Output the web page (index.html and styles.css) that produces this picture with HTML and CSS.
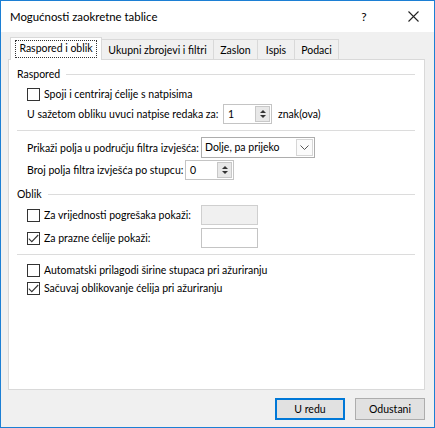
FILE: index.html
```html
<!DOCTYPE html>
<html lang="hr">
<head>
<meta charset="utf-8">
<title>Mogućnosti zaokretne tablice</title>
<link rel="stylesheet" href="styles.css">
</head>
<body>
<div class="window">
  <div class="titlebar">
    <span class="title">Mogućnosti zaokretne tablice</span>
    <span class="help">?</span>
    <span class="close">
      <svg width="11" height="11" viewBox="0 0 11 11"><path d="M0.5 0.5 L10.5 10.5 M10.5 0.5 L0.5 10.5" stroke="#222" stroke-width="1.1" fill="none"/></svg>
    </span>
  </div>

  <div class="client">
    <div class="tabs">
      <div class="tab active t-layout"><span class="focus">Raspored i oblik</span></div>
      <div class="tab t-totals">Ukupni zbrojevi i filtri</div>
      <div class="tab t-display">Zaslon</div>
      <div class="tab t-print">Ispis</div>
      <div class="tab t-data">Podaci</div>
    </div>

    <div class="panel">
      <div class="group"><span>Raspored</span><i class="rule"></i></div>

      <label class="row r-check1">
        <span class="box"></span>
        <span>Spoji i centriraj ćelije s natpisima</span>
      </label>

      <div class="row r-indent">
        <span class="plain lbl-indent">U sažetom obliku uvuci natpise redaka za:</span>
        <span class="spin">
          <span class="val">1</span>
          <span class="arrows"><b class="up"></b><b class="down"></b></span>
        </span>
        <span class="unit">znak(ova)</span>
      </div>

      <div class="sep sep1"></div>

      <div class="row r-filter">
        <span class="plain lbl-filter">Prikaži polja u području filtra izvješća:</span>
        <span class="select">
          <span class="val">Dolje, pa prijeko</span>
          <span class="drop">
            <svg width="9" height="5" viewBox="0 0 9 5"><path d="M0.5 0.5 L4.5 4.5 L8.5 0.5" stroke="#555" fill="none"/></svg>
          </span>
        </span>
      </div>

      <div class="row r-count">
        <span class="plain lbl-count">Broj polja filtra izvješća po stupcu:</span>
        <span class="spin">
          <span class="val">0</span>
          <span class="arrows"><b class="up"></b><b class="down"></b></span>
        </span>
      </div>

      <div class="group g-oblik"><span>Oblik</span><i class="rule"></i></div>

      <div class="row r-field r-err">
        <label class="checkfield">
          <span class="box"></span>
          <span>Za vrijednosti pogrešaka pokaži:</span>
        </label>
        <span class="text-field disabled"></span>
      </div>

      <div class="row r-field r-empty">
        <label class="checkfield">
          <span class="box checked"><svg width="11" height="9" viewBox="0 0 11 9"><path d="M0.8 4.6 L3.8 7.6 L10.2 1" stroke="#333" stroke-width="1.1" fill="none"/></svg></span>
          <span>Za prazne ćelije pokaži:</span>
        </label>
        <span class="text-field"></span>
      </div>

      <div class="sep sep2"></div>

      <label class="row r-auto">
        <span class="box"></span>
        <span>Automatski prilagodi širine stupaca pri ažuriranju</span>
      </label>

      <label class="row r-keep">
        <span class="box checked"><svg width="11" height="9" viewBox="0 0 11 9"><path d="M0.8 4.6 L3.8 7.6 L10.2 1" stroke="#333" stroke-width="1.1" fill="none"/></svg></span>
        <span>Sačuvaj oblikovanje ćelija pri ažuriranju</span>
      </label>
    </div>

    <div class="footer">
      <button class="btn default">U redu</button>
      <button class="btn">Odustani</button>
    </div>
  </div>
</div>
</body>
</html>
```

FILE: styles.css
```css
* { box-sizing: border-box; }

html, body {
  margin: 0;
  padding: 0;
  background: #ffffff;
}

body {
  font-family: "Lato", "Noto Sans", sans-serif;
  font-size: 10.5px;
  color: #000;
}

.window {
  width: 435px;
  height: 428px;
  border: 1px solid #1c7fd4;
  background: #f0f0f0;
  display: flex;
  flex-direction: column;
}

/* title bar */
.titlebar {
  height: 31px;
  background: #ffffff;
  display: flex;
  align-items: center;
  padding-left: 9px;
  flex: none;
}
.title {
  font-size: 11.4px;
  flex: 1;
}
.help {
  width: 20px;
  text-align: center;
  font-size: 12px;
  margin-right: 27px;
}
.close {
  width: 24px;
  display: flex;
  justify-content: center;
  margin-right: 9px;
}

/* client area */
.client {
  flex: 1;
  display: flex;
  flex-direction: column;
  padding: 5px 9px 0 7px;
}

.tabs {
  display: flex;
  align-items: flex-end;
  height: 22px;
  padding-left: 2px;
  position: relative;
  z-index: 1;
}
.tab {
  height: 20px;
  border: 1px solid #d9d9d9;
  border-left: none;
  background: #f0f0f0;
  border-bottom: none;
  display: flex;
  align-items: center;
  justify-content: center;
  white-space: nowrap;
}
.t-layout { width: 92px; }
.t-totals { width: 112px; }
.t-display { width: 44px; }
.t-print { width: 37px; }
.t-data { width: 44px; }

.tab.active {
  height: 23px;
  margin-bottom: -1px;
  background: #ffffff;
  border-left: 1px solid #d9d9d9;
}
.focus {
  border: 1px dotted #333;
  padding: 0 3px 1px 3px;
  line-height: 15px;
}

.panel {
  height: 331px;
  background: #ffffff;
  border: 1px solid #d9d9d9;
  padding: 6px 8px 0 8px;
  display: flex;
  flex-direction: column;
}

/* group header with rule */
.group {
  display: flex;
  align-items: center;
  height: 16px;
  padding-right: 1px;
}
.group .rule {
  flex: 1;
  height: 1px;
  background: #dcdcdc;
  margin-left: 6px;
}
.g-oblik { margin-top: 6px; }

.row {
  display: flex;
  align-items: center;
  padding-left: 10px;
  white-space: nowrap;
}

.box {
  width: 13px;
  height: 13px;
  border: 1px solid #333;
  background: #fff;
  margin-right: 4px;
  flex: none;
  display: flex;
  align-items: center;
  justify-content: center;
}

.r-check1 { height: 16px; margin-top: 4px; }
.r-indent { height: 20px; margin-top: 2px; }
.lbl-indent { width: 196px; }
.lbl-filter { width: 174px; }
.lbl-count { width: 158px; }

.spin {
  width: 49px;
  height: 20px;
  border: 1px solid #c4c4c4;
  display: flex;
  background: #fff;
}
.spin .val {
  flex: 1;
  padding-left: 4px;
  line-height: 18px;
}
.arrows {
  width: 15px;
  display: flex;
  flex-direction: column;
  justify-content: center;
  gap: 2px;
  margin: 1px 1px 1px 0;
  background: #e8e8e8;
  border: 1px solid #c8c8c8;
  align-items: center;
}
.arrows b {
  width: 0;
  height: 0;
  border-left: 3px solid transparent;
  border-right: 3px solid transparent;
}
.arrows .up { border-bottom: 3px solid #333; }
.arrows .down { border-top: 3px solid #333; }
.unit { margin-left: 6px; }

.sep {
  height: 1px;
  background: #dcdcdc;
  margin-right: 1px;
}
.sep1 { margin-top: 6px; }
.sep2 { margin-top: 6px; }

.r-filter { height: 21px; margin-top: 6px; }
.select {
  width: 114px;
  height: 21px;
  border: 1px solid #adadad;
  display: flex;
  background: #fff;
}
.select .val {
  flex: 1;
  padding-left: 3px;
  line-height: 19px;
}
.drop {
  width: 17px;
  margin: 1px;
  border: 1px solid #d6d6d6;
  background: #fbfbfb;
  display: flex;
  align-items: center;
  justify-content: center;
}

.r-count { height: 20px; margin-top: 2px; }

.r-field { height: 20px; }
.r-err { margin-top: 3px; }
.r-empty { margin-top: 3px; }
.checkfield {
  display: flex;
  align-items: center;
  width: 174px;
}
.text-field {
  width: 57px;
  height: 20px;
  border: 1px solid #c4c4c4;
  background: #fff;
}
.text-field.disabled {
  background: #f0f0f0;
  border-color: #cfcfcf;
}

.r-auto { height: 16px; margin-top: 7px; }
.r-keep { height: 16px; margin-top: 2px; }

/* bottom buttons */
.footer {
  display: flex;
  justify-content: flex-end;
  gap: 10px;
  padding-top: 8px;
}
.btn {
  width: 70px;
  height: 22px;
  font: inherit;
  font-size: 10.5px;
  background: #e1e1e1;
  border: 1px solid #adadad;
  color: #000;
  padding: 0;
  margin: 0;
}
.btn.default {
  border: 2px solid #0078d7;
}
```
